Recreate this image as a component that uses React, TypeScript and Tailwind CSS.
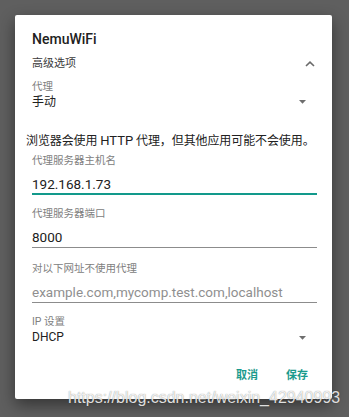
import React from "react";

const font = "font-['Roboto','Noto_Sans_CJK_SC',sans-serif]";

function Triangle() {
  return (
    <svg width="7" height="4" viewBox="0 0 7 4" className="mr-[11px] shrink-0">
      <polygon points="0,0 7,0 3.5,3.8" fill="#6e6e6e" />
    </svg>
  );
}

export default function App() {
  return (
    <div className={`relative w-[349px] h-[417px] overflow-hidden bg-[#5f5f5f] ${font}`}>
      <div className="relative ml-[15px] pt-[15px]">
        <div className="w-[317px] h-[384px] bg-white rounded-[2px] shadow-[0_6px_16px_rgba(0,0,0,0.45)] pl-[17px] pr-[15px] flex flex-col">
          <div className="pt-[16px] h-[33px] leading-[17px] text-[14px] font-medium text-[#212121]">NemuWiFi</div>

          <div className="h-[29px] flex items-center justify-between">
            <span className="mt-[4px] text-[11px] text-[#3a3a3a]">高级选项</span>
            <svg width="10" height="6" viewBox="0 0 10 6" className="mr-[2px] mt-[3px]">
              <polyline points="1,5 5,1.2 9,5" fill="none" stroke="#6a6a6a" strokeWidth="1.6" />
            </svg>
          </div>

          <div className="mt-[2px] h-[16px] leading-[16px] text-[10.5px] text-[#808080]">代理</div>
          <div className="h-[14px] flex items-center justify-between">
            <span className="text-[12px] leading-[14px] text-[#212121]">手动</span>
            <Triangle />
          </div>

          <p className="mt-[24px] -ml-[6px] h-[16px] leading-[16px] whitespace-nowrap text-[12px] tracking-[-0.1px] text-[#212121]">
            浏览器会使用 <span className="text-[13px] tracking-normal">HTTP</span> 代理，但其他应用可能不会使用。
          </p>

          <div className="mt-[4px] h-[16px] leading-[16px] text-[10.5px] text-[#808080]">代理服务器主机名</div>
          <div className="mt-[7px] h-[17px] leading-[17px] text-[13.5px] text-[#212121]">192.168.1.73</div>
          <div className="h-[2px] bg-[#12998b]" />

          <div className="mt-[11px] h-[16px] leading-[16px] text-[10.5px] text-[#808080]">代理服务器端口</div>
          <div className="mt-[7px] h-[17px] leading-[17px] text-[13.5px] text-[#212121]">8000</div>
          <div className="mt-[1px] h-px bg-[#8c8c8c]" />

          <div className="mt-[13px] h-[16px] leading-[16px] text-[10.5px] text-[#808080]">对以下网址不使用代理</div>
          <div className="mt-[7px] h-[17px] leading-[17px] text-[13.5px] text-[#8f8f8f] whitespace-nowrap">example.com,mycomp.test.com,localhost</div>
          <div className="mt-[1px] h-px bg-[#8c8c8c]" />

          <div className="mt-[11px] h-[16px] leading-[16px] text-[10.5px] text-[#808080]">IP 设置</div>
          <div className="h-[15px] flex items-center justify-between">
            <span className="text-[12px] leading-[15px] text-[#212121]">DHCP</span>
            <Triangle />
          </div>

          <div className="mt-[22px] h-[18px] flex items-center justify-end gap-[28px] pr-[9px]">
            <span className="text-[11px] font-bold text-[#1a9a8c]">取消</span>
            <span className="text-[11px] font-bold text-[#1a9a8c]">保存</span>
          </div>
        </div>
      </div>
      <div className="absolute left-[68px] top-[389px] text-[16px] leading-[18px] whitespace-nowrap font-['Liberation_Sans',sans-serif] text-white/85 [text-shadow:0_0_1px_rgba(0,0,0,0.5)]">
        https://blog.csdn.net/weixin_42940993
      </div>
    </div>
  );
}
